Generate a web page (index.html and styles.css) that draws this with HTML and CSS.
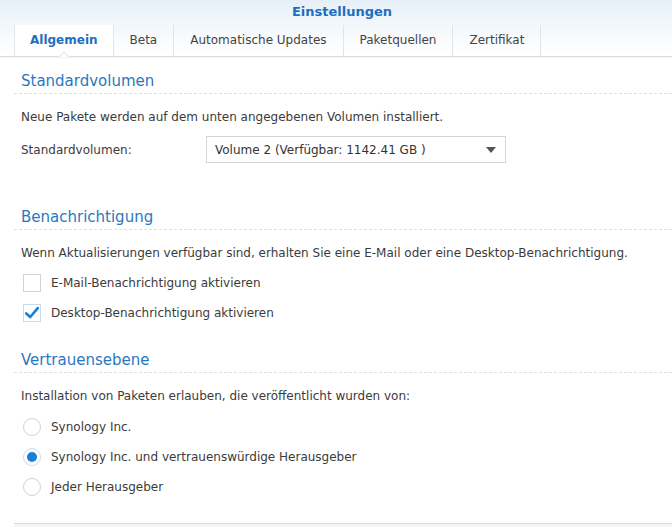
FILE: index.html
```html
<!DOCTYPE html>
<html lang="de">
<head>
<meta charset="utf-8">
<link rel="stylesheet" href="styles.css">
</head>
<body>
<div class="window">
  <header class="titlebar">
    <h1 class="title">Einstellungen</h1>
    <nav class="tabs">
      <span class="tab active">Allgemein</span>
      <span class="tab">Beta</span>
      <span class="tab">Automatische Updates</span>
      <span class="tab">Paketquellen</span>
      <span class="tab">Zertifikat</span>
    </nav>
  </header>
  <main class="content">
    <section class="section">
      <h2 class="section-title">Standardvolumen</h2>
      <p class="desc">Neue Pakete werden auf dem unten angegebenen Volumen installiert.</p>
      <div class="field">
        <span class="field-label">Standardvolumen:</span>
        <div class="select">
          <span>Volume 2 (Verfügbar: 1142.41 GB )</span>
          <span class="arrow"></span>
        </div>
      </div>
    </section>
    <section class="section notify">
      <h2 class="section-title">Benachrichtigung</h2>
      <p class="desc">Wenn Aktualisierungen verfügbar sind, erhalten Sie eine E-Mail oder eine Desktop-Benachrichtigung.</p>
      <label class="option"><span class="checkbox"></span>E-Mail-Benachrichtigung aktivieren</label>
      <label class="option"><span class="checkbox checked"><svg viewBox="0 0 18 18" width="18" height="18"><path d="M2.5 9.5 L7 13.5 L15.5 3.5" fill="none" stroke="#1a7fd9" stroke-width="3" stroke-linecap="round" stroke-linejoin="round"/></svg></span>Desktop-Benachrichtigung aktivieren</label>
    </section>
    <section class="section trust">
      <h2 class="section-title">Vertrauensebene</h2>
      <p class="desc">Installation von Paketen erlauben, die veröffentlicht wurden von:</p>
      <label class="option"><span class="radio"></span>Synology Inc.</label>
      <label class="option"><span class="radio checked"></span>Synology Inc. und vertrauenswürdige Herausgeber</label>
      <label class="option"><span class="radio"></span>Jeder Herausgeber</label>
    </section>
  </main>
  <footer class="bottom"></footer>
</div>
</body>
</html>
```
FILE: styles.css
```css
* { box-sizing: border-box; }
html, body { margin: 0; padding: 0; }
body {
  font-family: "DejaVu Sans", Verdana, sans-serif;
  font-size: 12px;
  color: #3b3b3b;
  background: #fff;
  width: 672px;
  height: 527px;
  overflow: hidden;
}
.window { display: flex; flex-direction: column; height: 527px; }
.titlebar {
  background: linear-gradient(#e6eff8 0%, #f6f9fc 55%, #ffffff 100%);
  padding-top: 3px;
}
.title {
  margin: 0;
  padding-left: 12px;
  text-align: center;
  font-size: 13px;
  font-weight: bold;
  color: #1d6fbf;
  line-height: 17px;
}
.tabs {
  display: flex;
  margin-top: 5px;
  padding-left: 14px;
  border-bottom: 1px solid #d9dde2;
  height: 32px;
  box-shadow: 0 1px 1px rgba(0,0,0,0.04);
}
.tab {
  position: relative;
  padding: 0 16px;
  line-height: 30px;
  border-right: 1px solid #e1e4e8;
  color: #444;
  margin: 0;
  height: 31px;
}
.tab.active {
  background: #fff;
  color: #1d6fbf;
  font-weight: bold;
  border-left: 1px solid #e1e4e8;
  padding: 0 15px;
}
.tab.active::after {
  content: "";
  position: absolute;
  left: 50%;
  bottom: -1px;
  margin-left: -6px;
  width: 0; height: 0;
  border-left: 6px solid transparent;
  border-right: 6px solid transparent;
  border-bottom: 5px solid #d9dde2;
}
.tab.active::before {
  content: "";
  position: absolute;
  left: 50%;
  bottom: -1px;
  margin-left: -5px;
  width: 0; height: 0;
  border-left: 5px solid transparent;
  border-right: 5px solid transparent;
  border-bottom: 4px solid #fff;
  z-index: 1;
}
.content { flex: 1; padding: 0 0 0 14px; }
.section-title {
  margin: 14px 0 0 0;
  padding: 0 7px 2px;
  font-size: 15px;
  font-weight: normal;
  color: #2a78c0;
  line-height: 20px;
  border-bottom: 1px dashed #e0e0e0;
}
.desc { margin: 15px 0 0 7px; line-height: 16px; }
.field { display: flex; align-items: center; margin: 11px 0 0 7px; }
.field-label { width: 185px; }
.select {
  width: 300px;
  height: 27px;
  border: 1px solid #d2d5d8;
  display: flex;
  align-items: center;
  justify-content: space-between;
  padding: 0 9px 0 8px;
  color: #333;
}
.arrow {
  width: 0; height: 0;
  border-left: 5px solid transparent;
  border-right: 5px solid transparent;
  border-top: 6px solid #555;
}
.option {
  display: flex;
  align-items: center;
  margin: 0 0 0 9px;
  height: 30px;
}
.desc + .option { margin-top: 7px; }
.trust .desc + .option { margin-top: 8px; }
.checkbox {
  width: 18px; height: 18px;
  border: 1px solid #cfd3d7;
  background: #fff;
  margin-right: 10px;
  display: inline-flex;
  align-items: center;
  justify-content: center;
}
.checkbox.checked { border-color: #c9dcef; }
.checkbox svg { display: block; }
.radio {
  width: 18px; height: 18px;
  border: 1px solid #cfd3d7;
  border-radius: 50%;
  margin-right: 10px;
  background: #fff;
  display: inline-flex;
  align-items: center;
  justify-content: center;
}
.radio.checked { border-color: #c9dcef; }
.radio.checked::after {
  content: "";
  width: 10px; height: 10px;
  border-radius: 50%;
  background: #1a7fd9;
}
.notify .section-title { margin-top: 44px; }
.trust .section-title { margin-top: 22px; }
.bottom { margin-left: 14px; height: 4px; border-top: 1px solid #d9dde2; background: #f4f5f6; }
```
